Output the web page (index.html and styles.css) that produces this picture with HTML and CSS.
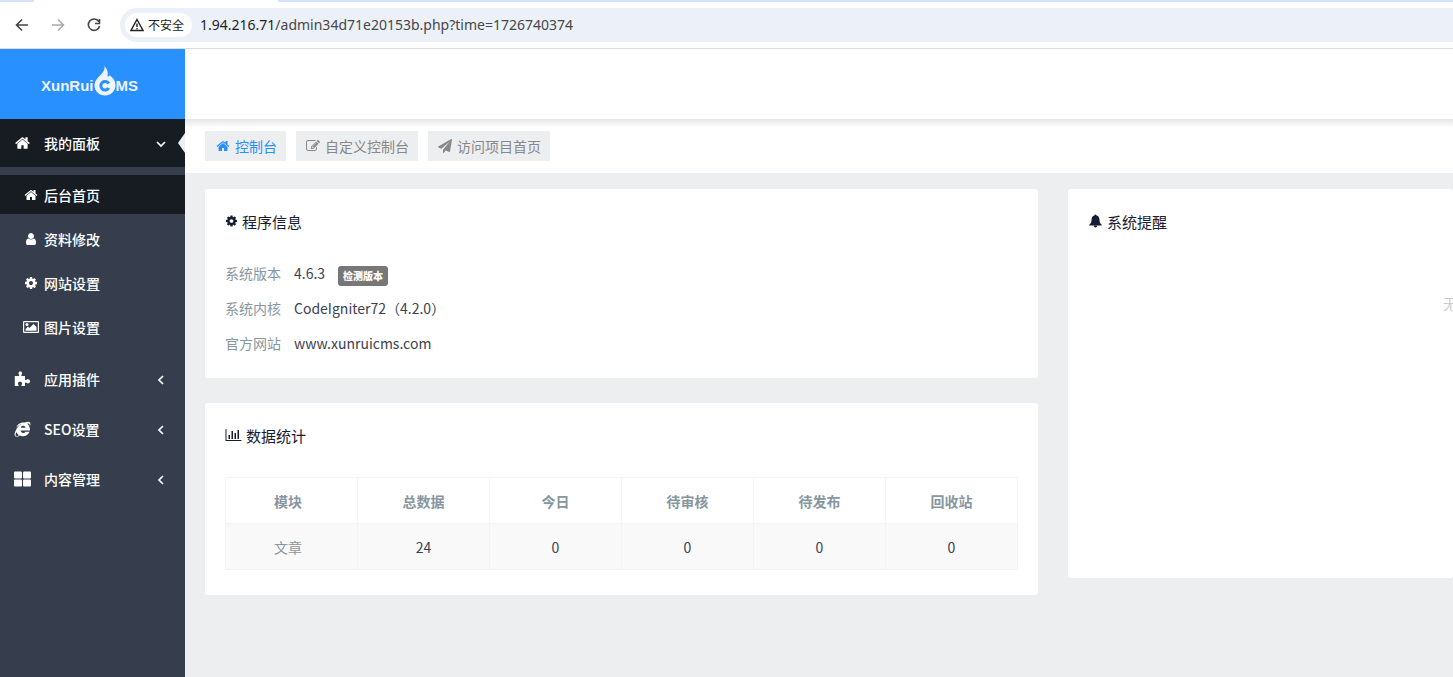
FILE: index.html
```html
<!DOCTYPE html>
<html lang="zh-CN">
<head>
<meta charset="utf-8">
<title>XunRuiCMS</title>
<link rel="stylesheet" href="styles.css">
</head>
<body>
<svg class="defs" aria-hidden="true">
<symbol id="home" viewBox="0 0 1792 1792"><path d="M1472 992v480q0 26-19 45t-45 19h-384v-384h-256v384h-384q-26 0-45-19t-19-45v-480q0-1 .5-3t.5-3l575-474 575 474q1 2 1 6zm223-69l-62 74q-8 9-21 11h-3q-13 0-21-7l-692-577-692 577q-12 8-24 7-13-2-21-11l-62-74q-8-10-7-23.5t11-21.5l719-599q32-26 76-26t76 26l244 204v-195q0-14 9-23t23-9h192q14 0 23 9t9 23v408l219 182q10 8 11 21.5t-7 23.5z"/></symbol>
<symbol id="cog" viewBox="0 0 1792 1792"><path d="M1152 896q0-106-75-181t-181-75-181 75-75 181 75 181 181 75 181-75 75-181zm512-109v222q0 12-8 23t-20 13l-185 28q-19 54-39 91 35 50 107 138 10 12 10 25t-9 23q-27 37-99 108t-94 71q-12 0-26-9l-138-108q-44 23-91 38-16 136-29 186-7 28-36 28h-222q-14 0-24.5-8.5t-11.5-21.5l-28-184q-49-16-90-37l-141 107q-10 9-25 9-14 0-25-11-126-114-165-168-7-10-7-23 0-12 8-23 15-21 51-66.5t54-70.5q-27-50-41-99l-183-27q-13-2-21-12.5t-8-23.5v-222q0-12 8-23t19-13l186-28q14-46 39-92-40-57-107-138-10-12-10-24 0-10 9-23 26-36 98.500-107.500t94.500-71.500q13 0 26 10l138 107q44-23 91-38 16-136 29-186 7-28 36-28h222q14 0 24.500 8.500t11.500 21.500l28 184q49 16 90 37l142-107q9-9 24-9 13 0 25 10 129 119 165 170 7 8 7 22 0 12-8 23-15 21-51 66.500t-54 70.500q26 50 41 98l183 28q13 2 21 12.500t8 23.500z"/></symbol>
<symbol id="user" viewBox="0 0 1792 1792"><path d="M1536 1399q0 109-62.500 187t-150.500 78h-854q-88 0-150.500-78t-62.500-187q0-85 8.500-160.500t31.500-152 58.500-131 94-89 134.500-34.500q131 128 313 128t313-128q76 0 134.500 34.500t94 89 58.500 131 31.500 152 8.500 160.500zm-256-887q0 159-112.500 271.500t-271.500 112.500-271.500-112.500-112.500-271.500 112.500-271.500 271.500-112.500 271.500 112.500 112.500 271.500z"/></symbol>
<symbol id="plane" viewBox="0 0 1792 1792"><path d="M1764 11q33 24 27 64l-256 1536q-5 29-32 45-14 8-31 8-11 0-24-5l-453-185-242 295q-18 23-49 23-13 0-22-4-19-7-30.500-23.500t-11.500-36.500v-349l864-1059-1069 925-395-162q-37-14-40-55-2-40 32-59l1664-960q15-9 32-9 20 0 36 11z"/></symbol>
<symbol id="edit" viewBox="0 0 1792 1792"><path d="M888 1184l116-116-152-152-116 116v56h96v96h56zm440-720q-16-16-33 1l-350 350q-17 17-1 33t33-1l350-350q17-17 1-33zm80 594v190q0 119-84.500 203.500t-203.500 84.500h-832q-119 0-203.500-84.500t-84.500-203.500v-832q0-119 84.500-203.500t203.500-84.500h832q63 0 117 25 15 7 18 23 3 17-9 29l-49 49q-14 14-32 8-23-6-45-6h-832q-66 0-113 47t-47 113v832q0 66 47 113t113 47h832q66 0 113-47t47-113v-126q0-13 9-22l64-64q15-15 35-7t20 29zm-96-738l288 288-672 672h-288v-288zm444 132l-92 92-288-288 92-92q28-28 68-28t68 28l152 152q28 28 28 68t-28 68z"/></symbol>
<symbol id="image" viewBox="0 0 16 14"><path fill-rule="evenodd" d="M1 1h14q1 0 1 1v10q0 1-1 1H1q-1 0-1-1V2q0-1 1-1zm.2 1.200v9.600h13.600V2.200zM2.500 10.800V9L5 6.500l1.500 1.500L10.500 4l3 3v3.800z"/><circle cx="4" cy="4.500" r="1.500"/></symbol>
<symbol id="puzzle" viewBox="0 0 16 16"><path d="M.3 5h3.900c.5 0 .8-.4.600-.9C4.400 3.500 4 3 4 2.200 4 1.200 4.800.500 5.800.500s1.800.7 1.800 1.700c0 .8-.5 1.300-.8 1.900-.2.500.1.900.600.900H10.500v3.300c0 .6.400.8.900.6.600-.3 1.100-.7 1.900-.7 1.300 0 2.300.8 2.300 2.100s-1 2.100-2.300 2.100c-.8 0-1.300-.6-1.900-.8-.5-.2-.9.100-.9.600V15H7.300c-.5 0-.6-.4-.4-.8.300-.5.700-.9.700-1.600 0-1.200-1-1.800-2.100-1.800s-2.100.6-2.100 1.800c0 .7.400 1.100.7 1.600.2.400 0 .8-.5.800H.3z"/></symbol>
<symbol id="ie" viewBox="0 0 18 17"><path fill-rule="evenodd" d="M16.900 10.200H7.100c.1 1.500 1.100 2.500 2.600 2.500 1 0 1.900-.5 2.400-1.300h4.300c-1 2.900-3.600 4.900-6.900 4.900-1.200 0-2.400-.3-3.400-.8-1.400 1-3.300 1.800-4.500 1.100C-.2 15.400.6 12 2.200 9.200 3.700 6.500 6 4.100 8.200 3c-2 .6-3.800 2-5.700 4.200C3.200 3.900 6.100 1.500 9.700 1.500c.6 0 1.200.1 1.800.2C13.600.7 15.800.200 16.800 1.300c.9 1 .7 2.600.1 4-.1-1.500-.4-3.400-2.900-2.500 1.900 1.300 3.100 3.900 2.900 7.400zM7.200 7.300h5c-.1-1.300-1.100-2.200-2.500-2.200S7.300 6 7.200 7.300zM2.700 11.800c-1.100 2-1.400 3.600-.7 4.200.6.500 1.900.1 3.200-.8-1.200-.8-2.100-2-2.500-3.400z"/></symbol>
<symbol id="grid" viewBox="0 0 16 14"><rect width="7.500" height="6.500" rx="1"/><rect x="8.500" width="7.500" height="6.500" rx="1"/><rect y="7.500" width="7.500" height="6.500" rx="1"/><rect x="8.500" y="7.500" width="7.500" height="6.500" rx="1"/></symbol>
<symbol id="bell" viewBox="0 0 14 15"><path d="M7 .5c.7 0 1.100.4 1.100 1 2 .5 3 2 3.100 4 .1 3 .7 4.600 2.500 6.100v.6H.3v-.6c1.800-1.500 2.400-3.100 2.500-6.100.1-2 1.100-3.500 3.100-4 0-.6.4-1 1.100-1zM5.200 12.700h3.600C8.700 13.800 8 14.500 7 14.500s-1.700-.7-1.800-1.800z"/></symbol>
<symbol id="chart" viewBox="0 0 16 12"><path d="M0 0h1v11h15v1H0zM3 6h1.500v4H3zM6 2h1.500v8H6zM9 4h1.500v6H9zM12 1h1.500v9H12z"/></symbol>
<symbol id="left" viewBox="0 0 10 10"><path class="line" d="M7 1L3 5l4 4"/></symbol>
<symbol id="down" viewBox="0 0 10 10"><path class="line" d="M1 3l4 4 4-4"/></symbol>
</svg>

<div class="browser">
  <div class="tabs"><span class="tab"></span></div>
  <div class="toolbar">
    <button class="nav" aria-label="后退"><svg viewBox="0 0 16 16"><path d="M14 8H3M8 2.500L2.500 8 8 13.500"/></svg></button>
    <button class="nav off" aria-label="前进"><svg viewBox="0 0 16 16"><path d="M2 8h11M8 2.500L13.500 8 8 13.500"/></svg></button>
    <button class="nav" aria-label="刷新"><svg viewBox="0 0 16 16"><path d="M12.800 4.500A5.700 5.700 0 1 0 13.600 9M13.500 2v4.500H9"/></svg></button>
    <div class="address">
      <button class="chip"><svg viewBox="0 0 14 14"><path d="M7 1.500L13 12.500H1zM7 5.500v3.500M7 10v1.200"/></svg>不安全</button>
      <span class="url"><b>1.94.216.71</b>/admin34d71e20153b.php?time=1726740374</span>
    </div>
  </div>
</div>

<div class="app">
  <aside class="side">
    <a class="logo" href="#"><span>XunRui</span><svg viewBox="0 0 22 30"><path d="M10.500 0c3 3.200 3.800 6.500 3 10.500 1 .3 1.700-.3 2-1.300 3.600 2.500 6 5.800 6 10C21.500 25 17 29.500 11 29.500S.5 25 .5 19.500c0-4.500 3-7.500 6-10.500 2.500-2.600 4.500-5 4-9z"/><path class="c" d="M14.800 17.500a4.300 4.300 0 1 0 0 4.500"/></svg><span>MS</span></a>
    <nav>
      <a class="item open" href="#"><svg class="big"><use href="#home"/></svg>我的面板<svg class="arrow"><use href="#down"/></svg></a>
      <div class="sub">
        <a class="current" href="#"><svg><use href="#home"/></svg>后台首页</a>
        <a href="#"><svg><use href="#user"/></svg>资料修改</a>
        <a href="#"><svg><use href="#cog"/></svg>网站设置</a>
        <a href="#"><svg><use href="#image"/></svg>图片设置</a>
      </div>
      <a class="item" href="#"><svg class="big"><use href="#puzzle"/></svg>应用插件<svg class="arrow"><use href="#left"/></svg></a>
      <a class="item" href="#"><svg class="big"><use href="#ie"/></svg>SEO设置<svg class="arrow"><use href="#left"/></svg></a>
      <a class="item" href="#"><svg class="big"><use href="#grid"/></svg>内容管理<svg class="arrow"><use href="#left"/></svg></a>
    </nav>
  </aside>
  <div class="main">
    <header class="top"></header>
    <div class="actions">
      <a class="active" href="#"><svg><use href="#home"/></svg>控制台</a>
      <a href="#"><svg><use href="#edit"/></svg>自定义控制台</a>
      <a href="#"><svg><use href="#plane"/></svg>访问项目首页</a>
    </div>
    <main class="content">
      <div class="column">
        <section class="card">
          <h2><svg><use href="#cog"/></svg>程序信息</h2>
          <dl>
            <div><dt>系统版本</dt><dd>4.6.3<button class="badge">检测版本</button></dd></div>
            <div><dt>系统内核</dt><dd>CodeIgniter72（4.2.0）</dd></div>
            <div><dt>官方网站</dt><dd><a href="#">www.xunruicms.com</a></dd></div>
          </dl>
        </section>
        <section class="card">
          <h2><svg class="wide"><use href="#chart"/></svg>数据统计</h2>
          <table>
            <thead><tr><th>模块</th><th>总数据</th><th>今日</th><th>待审核</th><th>待发布</th><th>回收站</th></tr></thead>
            <tbody><tr><td>文章</td><td>24</td><td>0</td><td>0</td><td>0</td><td>0</td></tr></tbody>
          </table>
        </section>
      </div>
      <section class="card notice">
        <h2><svg class="bell"><use href="#bell"/></svg>系统提醒</h2>
        <p>无</p>
      </section>
    </main>
  </div>
</div>
</body>
</html>
```
FILE: styles.css
```css
* { box-sizing: border-box; }
body {
  margin: 0;
  min-height: 100vh;
  display: flex;
  flex-direction: column;
  overflow: hidden;
  background: #eceef0;
  color: #3b4251;
  font: 14px/20px "Noto Sans CJK SC", sans-serif;
}
a { color: inherit; text-decoration: none; }
button { font: inherit; border: 0; padding: 0; background: none; }
svg { fill: currentColor; flex: none; }
.defs { position: absolute; width: 0; height: 0; }
.line { fill: none; stroke: currentColor; stroke-width: 1.7; }

.browser { background: #fff; border-bottom: 1px solid #dadce0; }
.tabs { height: 2px; background: #d3e3fd; padding-left: 34px; }
.tab { display: block; width: 244px; height: 2px; background: #fff; }
.toolbar { display: flex; align-items: center; height: 46px; padding-left: 14px; gap: 20px; }
.nav { width: 16px; height: 16px; color: #474747; }
.nav svg { display: block; width: 16px; height: 16px; fill: none; stroke: currentColor; stroke-width: 1.6; }
.nav.off { color: #aaa; }
.address {
  flex: 1;
  display: flex;
  align-items: center;
  gap: 8px;
  height: 34px;
  margin-left: -2px;
  padding-left: 5px;
  background: #ecf0f9;
  border-radius: 17px 0 0 17px;
}
.chip {
  display: flex;
  align-items: center;
  gap: 4px;
  height: 24px;
  padding: 0 8px 0 5px;
  border-radius: 12px;
  background: #fff;
  color: #222;
  font-size: 12px;
}
.chip svg { width: 14px; height: 14px; fill: none; stroke: currentColor; stroke-width: 1.4; }
.url { font: 14px/20px "Noto Sans", sans-serif; color: #474747; }
.url b { font-weight: 400; color: #1f1f1f; }

.app { flex: 1; display: flex; }
.side { width: 185px; flex: none; background: #363e4d; color: #fff; font-weight: 500; }
.logo {
  display: flex;
  align-items: flex-end;
  height: 70px;
  padding: 0 0 23px 41px;
  background: #2890ff;
  color: #eef4ff;
  font: bold 15px/20px "Liberation Sans", sans-serif;
}
.logo svg { width: 22px; height: 30px; }
.logo .c { fill: none; stroke: #2890ff; stroke-width: 3; }
.item { position: relative; display: flex; align-items: center; height: 50px; padding: 0 19px 0 14px; }
.item .big { width: 17px; height: 16px; margin-right: 13px; }
.item .arrow { width: 10px; height: 10px; margin: 2px 0 0 auto; }
.item.open { height: 48px; padding-bottom: 1px; background: #171c23; }
.item.open::after {
  content: "";
  position: absolute;
  right: 0;
  top: 14px;
  border: 10px solid transparent;
  border-left-width: 0;
  border-right: 7px solid #eceef4;
}
.sub { display: grid; gap: 5px; padding: 8px 0; }
.sub a { display: flex; align-items: center; gap: 5px; height: 39px; padding: 0 0 0 23px; }
.sub svg { width: 16px; height: 14px; }
.sub .current { background: #171c23; }

.main { flex: 1; min-width: 0; }
.top { height: 70px; background: #fff; }
.actions {
  display: flex;
  gap: 10px;
  height: 54px;
  padding: 12px 20px;
  background: linear-gradient(#e6e6e6, #fff 9px);
}
.actions a { display: flex; align-items: center; gap: 5px; padding: 0 9px 0 11px; background: #eceef0; color: #888; }
.actions a + a { padding-left: 10px; }
.actions svg { width: 14px; height: 14px; }
.actions .active { color: #2890ff; }
.content { display: grid; grid-template-columns: 833fr 385fr; gap: 30px; align-items: start; padding: 16px 0 0 20px; }
.column { display: grid; gap: 25px; }
.card { min-width: 0; padding: 23px 20px 25px; background: #fff; border-radius: 3px; }
h2 { display: flex; align-items: center; gap: 4px; margin: 0; color: #181c32; font-size: 15px; line-height: 20px; font-weight: 400; }
h2 svg { width: 13px; height: 14px; margin-bottom: 3px; }
h2 .wide { width: 17px; height: 12px; }
h2 .bell { width: 15px; height: 14px; }
dl { display: grid; gap: 15px; margin: 31px 0 0; }
dl div { display: flex; }
dt { width: 69px; color: #8896a0; }
dd { display: flex; align-items: center; margin: 0; }
.badge {
  height: 20px;
  margin: 3px 0 -3px 13px;
  padding: 0 5px;
  border-radius: 3px;
  background: #777;
  color: #fff;
  font-size: 10px;
  line-height: 18px;
  font-weight: 900;
}
table { width: 100%; margin-top: 31px; border-collapse: collapse; table-layout: fixed; text-align: center; }
th, td { height: 46px; padding: 0; border: 1px solid #f2f4f5; }
th { color: #8896a0; font-weight: 700; }
td:first-child, th:first-child { color: #8896a0; padding-right: 7px; }
tbody tr { background: #f9f9f9; }
.notice { min-height: 389px; overflow: hidden; }
.notice p { margin: 61px -24px 0 0; text-align: right; color: #ccc; }
```
